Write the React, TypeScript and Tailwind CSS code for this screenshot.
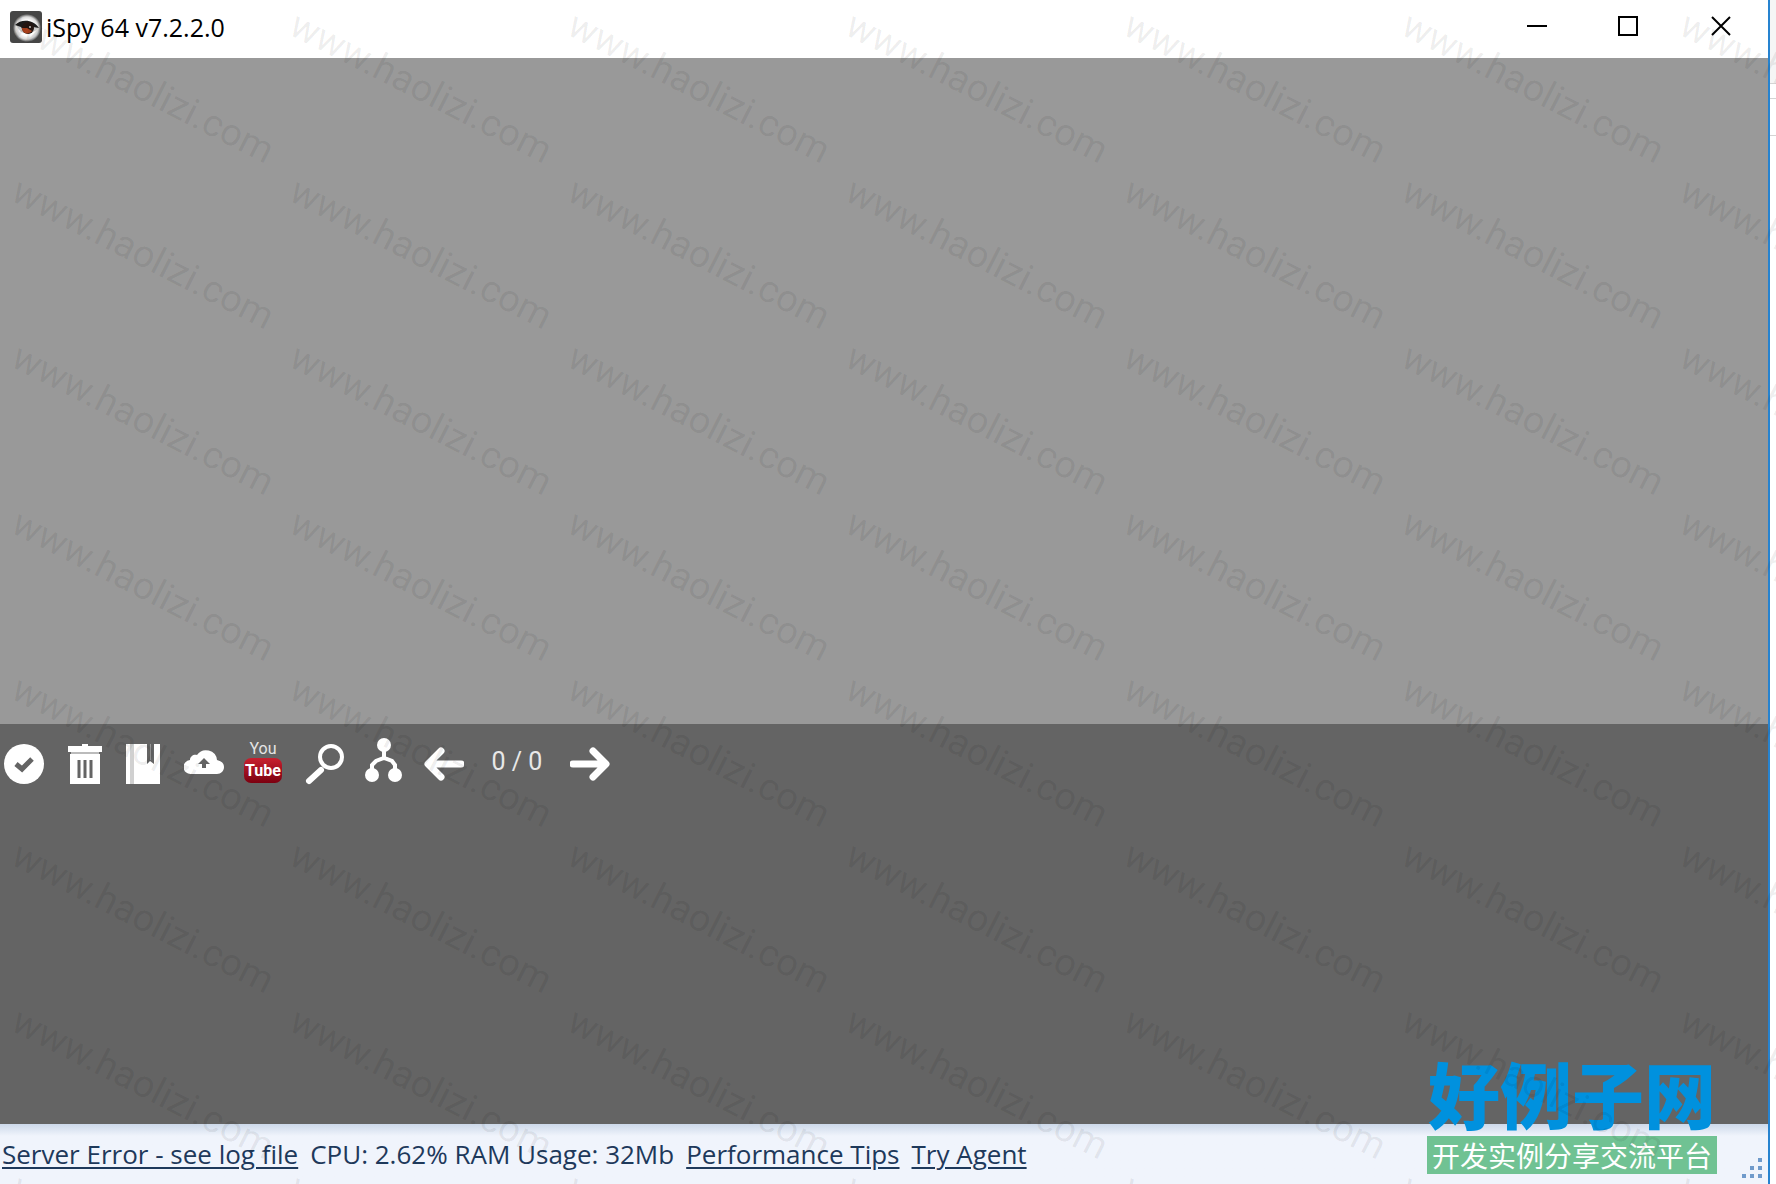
import type { ReactNode } from 'react';

const MARK_COUNT = 56;

const tools: { label: string; icon: ReactNode }[] = [
  {
    label: 'Select all',
    icon: (
      <>
        <circle cx="20" cy="26" r="20" fill="#fff" />
        <path d="M12 26l6 5 10-10" fill="none" stroke="#646464" strokeWidth="5" />
      </>
    ),
  },
  {
    label: 'Delete',
    icon: (
      <>
        <path d="M4 8h14V6h6v2h14v6H4z" fill="#fff" />
        <path d="M7 14h28v2H7z" fill="#bbb" />
        <path d="M6 16h30v30H6z" fill="#fff" />
        <path d="M15 22v18M21 22v18M27 22v18" stroke="#646464" strokeWidth="3" />
      </>
    ),
  },
  {
    label: 'Archive',
    icon: (
      <>
        <path d="M2 6h34v40H2z" fill="#fff" />
        <path d="M6 6h4v40H6z" fill="#d0d0d0" />
        <path d="M23 6h7v20l-4-3-3 3z" fill="#646464" />
        <path d="M26 6h1v16h-1z" fill="#999" />
      </>
    ),
  },
  {
    label: 'Upload to cloud',
    icon: (
      <>
        <path
          d="M7 36a7 7 0 0 1-1-14c0-4 4-6 7-5a11 11 0 0 1 20 5c4 1 7 3 7 7s-3 7-7 7z"
          fill="#fff"
        />
        <path d="M20 20l6 6h-4v4h-4v-4h-4z" fill="#646464" />
      </>
    ),
  },
  {
    label: 'Upload to YouTube',
    icon: (
      <>
        <rect x="0" y="20" width="38" height="25" rx="7" fill="url(#tube)" />
        <text x="19" y="16" textAnchor="middle" fontSize="16" fill="#e4e4e4">
          You
        </text>
        <text x="19" y="38" textAnchor="middle" fontSize="16" fontWeight="700" fill="#fff">
          Tube
        </text>
      </>
    ),
  },
  {
    label: 'Search',
    icon: (
      <g fill="none" stroke="#fff">
        <circle cx="27" cy="19" r="11" strokeWidth="4" />
        <path d="M17 32L5 43" strokeWidth="6" strokeLinecap="round" />
      </g>
    ),
  },
  {
    label: 'Merge',
    icon: (
      <>
        <g fill="#fff">
          <circle cx="20" cy="7" r="7" />
          <circle cx="8" cy="37" r="7" />
          <circle cx="31" cy="37" r="7" />
        </g>
        <path d="M20 10v11M8 36v-9l4-4 8-3 8 3 3 4v9" fill="none" stroke="#fff" strokeWidth="4" />
      </>
    ),
  },
  {
    label: 'Previous page',
    icon: (
      <path
        d="M37 26H5M17 13L4 26l13 13"
        fill="none"
        stroke="#fff"
        strokeWidth="7"
        strokeLinecap="round"
        strokeLinejoin="round"
      />
    ),
  },
];

export default function App() {
  return (
    <div className="relative flex h-screen overflow-hidden bg-white font-['Open_Sans',sans-serif]">
      <div className="flex min-w-0 flex-1 flex-col border-r-2 border-[#2683d0]">
        <TitleBar />
        <main className="min-h-0 flex-1 bg-[#999999]" />
        <MediaPanel />
        <StatusBar />
      </div>
      <DesktopEdge />
      <Brand />
      <Watermark />
    </div>
  );
}

function TitleBar() {
  return (
    <header className="flex h-[58px] shrink-0 items-center justify-between bg-white text-black">
      <div className="flex items-center gap-1 pb-1 pl-[10px]">
        <EyeIcon />
        <h1 className="text-[25px] leading-8">iSpy 64 v7.2.2.0</h1>
      </div>
      <div className="flex gap-[52px] pr-[26px] pb-[6px]">
        <button type="button" aria-label="Minimize" className="p-1">
          <svg width="32" height="32" viewBox="0 0 32 32" className="block">
            <path d="M5 16h20" stroke="currentColor" strokeWidth="2" />
          </svg>
        </button>
        <button type="button" aria-label="Maximize" className="p-1">
          <svg width="32" height="32" viewBox="0 0 32 32" className="block">
            <path d="M5 7h18v18H5z" fill="none" stroke="currentColor" strokeWidth="2" />
          </svg>
        </button>
        <button type="button" aria-label="Close" className="p-1">
          <svg width="32" height="32" viewBox="0 0 32 32" className="block">
            <path d="M6 7l18 18M24 7L6 25" stroke="currentColor" strokeWidth="2" />
          </svg>
        </button>
      </div>
    </header>
  );
}

function MediaPanel() {
  return (
    <section className="h-[400px] shrink-0 bg-[#646464] px-1 pt-[14px]">
      <svg width="0" height="0" className="absolute">
        <linearGradient id="tube" x1="0" y1="0" x2="0" y2="1">
          <stop offset="0" stopColor="#c8202f" />
          <stop offset="1" stopColor="#7c0010" />
        </linearGradient>
      </svg>
      <div className="flex items-center gap-5">
        {tools.map((tool) => (
          <button key={tool.label} type="button" aria-label={tool.label}>
            <svg
              width="40"
              height="48"
              viewBox="0 0 40 48"
              className="block font-['Roboto',sans-serif]"
            >
              {tool.icon}
            </svg>
          </button>
        ))}
        <span className="w-[66px] text-center font-['Roboto',sans-serif] text-[25px] leading-8 text-[#e8e8e8]">
          0 / 0
        </span>
        <button type="button" aria-label="Next page">
          <svg width="40" height="48" viewBox="0 0 40 48" className="block">
            <path
              d="M3 26h32M23 13l13 13-13 13"
              fill="none"
              stroke="#fff"
              strokeWidth="7"
              strokeLinecap="round"
              strokeLinejoin="round"
            />
          </svg>
        </button>
      </div>
    </section>
  );
}

function StatusBar() {
  return (
    <footer className="flex h-[60px] shrink-0 items-center gap-3 bg-[#f0f4fc] bg-linear-to-b from-[#cdd9ea] to-[#f0f4fc] to-20% pl-[2px] text-[26px] leading-8 whitespace-nowrap text-[#1e395b]">
      <a href="#log" className="underline decoration-2 underline-offset-3">
        Server Error - see log file
      </a>
      <span>CPU: 2.62% RAM Usage: 32Mb</span>
      <a href="#tips" className="underline decoration-2 underline-offset-3">
        Performance Tips
      </a>
      <a href="#agent" className="underline decoration-2 underline-offset-3">
        Try Agent
      </a>
      <svg width="20" height="20" viewBox="0 0 20 20" className="mr-[6px] mb-[6px] ml-auto self-end">
        <path
          d="M16 0h4v4h-4zM8 8h4v4H8zM16 8h4v4h-4zM0 16h4v4H0zM8 16h4v4H8zM16 16h4v4h-4z"
          fill="#6f9acb"
        />
      </svg>
    </footer>
  );
}

// Sliver of the window behind, right of the frame
function DesktopEdge() {
  return (
    <div className="flex w-[6px] shrink-0 flex-col">
      <div className="h-[84px] border-b border-[#d4d4d4] bg-[#f5f5f5]" />
      <div className="h-[15px] border-b border-[#d4d4d4]" />
      <div className="h-[37px] border-b border-[#d4d4d4]" />
    </div>
  );
}

function Brand() {
  return (
    <div className="absolute right-[59px] bottom-[10px] flex flex-col items-center font-['Noto_Sans_CJK_SC',sans-serif]">
      <div className="text-[72px] leading-[88px] font-black text-[#0091de]">好例子网</div>
      <div className="w-[290px] bg-[#70c293] text-center text-[28px] leading-[38px] text-white">
        开发实例分享交流平台
      </div>
    </div>
  );
}

function Watermark() {
  return (
    <div
      aria-hidden="true"
      className="pointer-events-none absolute inset-0 grid auto-rows-[166px] grid-cols-[repeat(7,278px)] overflow-hidden pt-1 pl-6 font-['Roboto',sans-serif] text-[38px] leading-10 text-black/7"
    >
      {Array.from({ length: MARK_COUNT }, (_, i) => (
        <span key={i} className="origin-top-left rotate-27 whitespace-nowrap">
          www.haolizi.com
        </span>
      ))}
    </div>
  );
}

function EyeIcon() {
  return (
    <svg width="32" height="32" viewBox="0 0 32 32" className="block">
      <defs>
        <radialGradient id="lid">
          <stop offset="0.55" stopColor="#fff" />
          <stop offset="0.8" stopColor="#d8d8d8" />
          <stop offset="1" stopColor="#484848" />
        </radialGradient>
      </defs>
      <rect width="32" height="32" rx="3" fill="#464646" />
      <ellipse cx="17" cy="17" rx="14" ry="14" fill="url(#lid)" />
      <path d="M6 14c6-6 16-6 23 3-6 6-14 7-19 3z" fill="#c9c9c9" />
      <path d="M5 14c6-6 18-6 24 3l-6-1c-2 5-10 6-12 0z" fill="#1c1c1c" />
      <circle cx="18" cy="17" r="6" fill="#241612" />
      <path d="M12 17c0 6 7 7 10 3l-5-3z" fill="#a9411d" />
      <circle cx="20" cy="16" r="1" fill="#ccc" />
    </svg>
  );
}
